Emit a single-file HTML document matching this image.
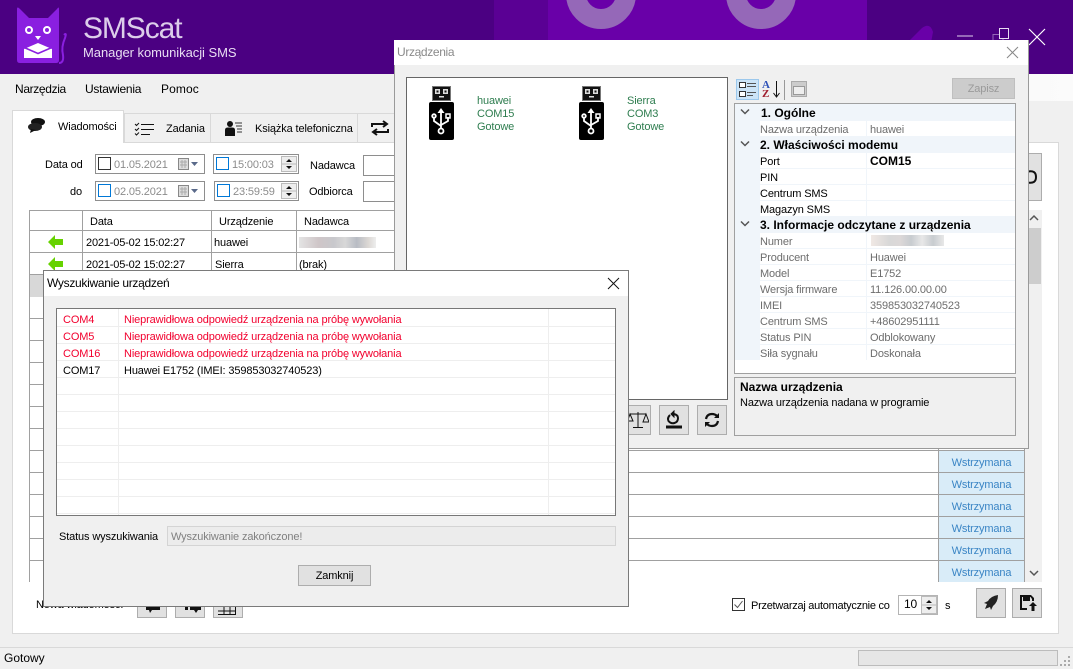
<!DOCTYPE html>
<html lang="pl"><head><meta charset="utf-8"><title>SMScat</title>
<style>
html,body{margin:0;padding:0}
body{width:1073px;height:669px;overflow:hidden;position:relative;background:#f0f0f0;font:11px/14px "Liberation Sans",sans-serif;color:#000;letter-spacing:-.13px}
div,span,svg{position:absolute;box-sizing:border-box}
span{white-space:nowrap;transform:translateY(1px)}
.b{background:#e1e1e1;border:1px solid #adadad}
.l{background:#a0a0a0}
.g{color:#2e7d4f}
.r{color:#f2002e}
.gr{color:#6d6d6d}
.h{font-size:12px;font-weight:700;letter-spacing:0}
.ws{background:#d9ecf8;color:#3a85c5;text-align:center;line-height:24px;left:939px;width:85px;height:21px}
.s{background:#f0f5fa;left:760px;width:255px;height:1px}
.e{background:#eeeeee;left:57px;width:558px;height:1px}
</style></head><body>

<!-- header -->
<div style="left:0;top:0;width:1073px;height:74px;background:#4b0082;overflow:hidden">
<div style="left:494px;top:0;width:54px;height:74px;background:#5a0094"></div>
<div style="left:548px;top:0;width:319px;height:74px;background:#6900a8"></div>
<div style="left:566px;top:-41px;width:70px;height:70px;border-radius:50%;border:20px solid #9568b8"></div>
<div style="left:726px;top:-41px;width:70px;height:70px;border-radius:50%;border:20px solid #9568b8"></div>
<svg style="left:900px;top:20px" width="50" height="30"><path d="M2 28L22 8Q30 2 33 12L30 28Z" fill="#6900a8"/></svg>
</div>
<svg style="left:15px;top:5px" width="55" height="62" viewBox="0 0 55 62">
<path d="M2 4Q2 1 5 4L14 13H33L42 4Q44 1 44 4V55Q44 58 41 58H5Q2 58 2 55Z" fill="#8a1fe0"/>
<path d="M49 30Q52 27 50 33Q46 42 48 50Q49 58 44 58" fill="none" stroke="#8a1fe0" stroke-width="2"/>
<circle cx="14" cy="25" r="3" fill="none" stroke="#fff" stroke-width="2"/>
<circle cx="32" cy="25" r="3" fill="none" stroke="#fff" stroke-width="2"/>
<path d="M20 31H26L23 35Z" fill="#fff"/>
<path d="M9 44L23 38L37 44V53H9Z" fill="#fff"/>
<path d="M8 42L23 48.500L38 42" fill="none" stroke="#8a1fe0" stroke-width="1.500"/>
</svg>
<span style="left:83px;top:10px;font-size:30px;line-height:36px;color:#dccdea;letter-spacing:-1.1px">SMScat</span>
<span style="left:83px;top:44px;font-size:13px;line-height:16px;color:#e8dcf2;letter-spacing:-.05px">Manager komunikacji SMS</span>
<svg style="left:950px;top:25px" width="100" height="25"><path d="M7 11H23" stroke="#9568b8" stroke-width="2"/><path d="M43 9.500H53V25H43Z" fill="none" stroke="#9568b8"/><path d="M49.500 3.500H58.500V13.500H49.500Z" fill="#4b0082" stroke="#e8dcf2"/><path d="M79 4L95 20M95 4L79 20" stroke="#fff" stroke-width="1.200"/></svg>

<!-- menu -->
<div style="left:0;top:74px;width:1073px;height:27px;background:linear-gradient(90deg,#f0f0f0 50%,#fbfbfb)"></div>
<span style="left:15px;top:81px;font-size:12px;letter-spacing:-.35px">Narzędzia</span>
<span style="left:85px;top:81px;font-size:12px;letter-spacing:-.25px">Ustawienia</span>
<span style="left:161px;top:81px;font-size:12px;letter-spacing:.1px">Pomoc</span>

<!-- tabs -->
<div style="left:12px;top:142px;width:1047px;height:492px;background:#fff;border:1px solid #d9d9d9"></div>
<div style="left:124px;top:113px;width:87px;height:30px;background:#f0f0f0;border:1px solid #d9d9d9"></div>
<div style="left:210px;top:113px;width:148px;height:30px;background:#f0f0f0;border:1px solid #d9d9d9"></div>
<div style="left:357px;top:113px;width:60px;height:30px;background:#f0f0f0;border:1px solid #d9d9d9"></div>
<div style="left:12px;top:110px;width:112px;height:33px;background:#fff;border:1px solid #d9d9d9;border-bottom:0"></div>
<svg style="left:27px;top:117px" width="20" height="18"><ellipse cx="11" cy="5" rx="7" ry="4" fill="#111"/><ellipse cx="8" cy="10" rx="7" ry="4" fill="#222"/><path d="M4 12L3 16L9 13Z" fill="#111"/></svg>
<span style="left:58px;top:119px">Wiadomości</span>
<svg style="left:134px;top:122px" width="20" height="14" stroke="#111" fill="none"><path d="M1 2L2.500 3.500L5 1M1 7L2.500 8.500L5 6M1 11.500L2.500 13L5 10.500"/><path d="M7 2.500H20M7 7.500H20M7 12.500H16"/></svg>
<span style="left:166px;top:121px">Zadania</span>
<svg style="left:224px;top:121px" width="18" height="15"><circle cx="6" cy="3" r="3" fill="#111"/><path d="M1 15V9Q1 6.500 4 6.500H8Q11 6.500 11 9V15Z" fill="#111"/><path d="M11 2H18M12 5H18M13 8H18M13 11H18" stroke="#333"/></svg>
<span style="left:255px;top:121px">Książka telefoniczna</span>
<svg style="left:371px;top:120px" width="18" height="16" fill="none" stroke="#111" stroke-width="2"><path d="M1 7V4H15M12 1L16 4L12 7M17 9V12H3M6 9L2 12L6 15"/></svg>

<!-- filter row -->
<span style="left:45px;top:157px;">Data od</span><span style="left:70px;top:184px">do</span>
<div style="left:95px;top:154px;width:110px;height:20px;border:1px solid #8e8e8e"></div>
<div style="left:95px;top:181px;width:110px;height:20px;border:1px solid #8e8e8e"></div>
<div style="left:98px;top:157px;width:13px;height:13px;border:1px solid #333"></div>
<div style="left:98px;top:184px;width:13px;height:13px;border:1px solid #0078d7"></div>
<span style="left:114px;top:157px;color:#8c8c8c">01.05.2021</span>
<span style="left:114px;top:184px;color:#8c8c8c">02.05.2021</span>
<svg style="left:178px;top:157px" width="24" height="14"><rect x="0.500" y="1.500" width="10" height="11" fill="#ddd" stroke="#888"/><path d="M2 5H9M2 8H9M4 3V11M7 3V11" stroke="#aaa"/><path d="M13 5H20L16.500 9Z" fill="#5a6a8a"/></svg>
<svg style="left:178px;top:184px" width="24" height="14"><rect x="0.500" y="1.500" width="10" height="11" fill="#ddd" stroke="#888"/><path d="M2 5H9M2 8H9M4 3V11M7 3V11" stroke="#aaa"/><path d="M13 5H20L16.500 9Z" fill="#5a6a8a"/></svg>
<div style="left:213px;top:154px;width:86px;height:20px;border:1px solid #8e8e8e"></div>
<div style="left:214px;top:181px;width:85px;height:20px;border:1px solid #8e8e8e"></div>
<div style="left:216px;top:157px;width:13px;height:13px;border:1px solid #0078d7"></div>
<div style="left:217px;top:184px;width:13px;height:13px;border:1px solid #0078d7"></div>
<span style="left:232px;top:157px;color:#8c8c8c">15:00:03</span>
<span style="left:233px;top:184px;color:#8c8c8c">23:59:59</span>
<svg style="left:281px;top:156px" width="16" height="16"><rect x="0.500" y="0.500" width="15" height="15" fill="#eee" stroke="#bbb"/><path d="M0 8H16" stroke="#bbb"/><path d="M5 6L8 3L11 6ZM5 10H11L8 13Z" fill="#111"/></svg>
<svg style="left:281px;top:183px" width="16" height="16"><rect x="0.500" y="0.500" width="15" height="15" fill="#eee" stroke="#bbb"/><path d="M0 8H16" stroke="#bbb"/><path d="M5 6L8 3L11 6ZM5 10H11L8 13Z" fill="#111"/></svg>
<span style="left:310px;top:158px">Nadawca</span><span style="left:309px;top:184px">Odbiorca</span>
<div style="left:363px;top:155px;width:40px;height:21px;border:1px solid #8e8e8e;background:#fff"></div>
<div style="left:363px;top:181px;width:40px;height:21px;border:1px solid #8e8e8e;background:#fff"></div>
<div class="b" style="left:1012px;top:153px;width:30px;height:48px"></div>
<svg style="left:1026px;top:170px" width="12" height="14"><path d="M2 1.500Q10 0 10 7Q10 14 2 12.500" fill="none" stroke="#111" stroke-width="2"/></svg>

<!-- table -->
<div style="left:29px;top:210px;width:997px;height:372px;background:#fff"></div>
<div class="l" style="left:29px;top:210px;width:1px;height:372px"></div>
<div class="l" style="left:29px;top:210px;width:997px;height:1px"></div>
<div class="l" style="left:29px;top:230px;width:997px;height:1px"></div>
<div class="l" style="left:29px;top:252px;width:997px;height:1px"></div>
<div class="l" style="left:29px;top:274px;width:997px;height:1px"></div>
<div class="l" style="left:29px;top:296px;width:997px;height:1px"></div>
<div class="l" style="left:29px;top:318px;width:997px;height:1px"></div>
<div class="l" style="left:29px;top:340px;width:997px;height:1px"></div>
<div class="l" style="left:29px;top:362px;width:997px;height:1px"></div>
<div class="l" style="left:29px;top:384px;width:997px;height:1px"></div>
<div class="l" style="left:29px;top:406px;width:997px;height:1px"></div>
<div class="l" style="left:29px;top:428px;width:997px;height:1px"></div>
<div class="l" style="left:29px;top:450px;width:997px;height:1px"></div>
<div class="l" style="left:29px;top:472px;width:997px;height:1px"></div>
<div class="l" style="left:29px;top:494px;width:997px;height:1px"></div>
<div class="l" style="left:29px;top:516px;width:997px;height:1px"></div>
<div class="l" style="left:29px;top:538px;width:997px;height:1px"></div>
<div class="l" style="left:29px;top:560px;width:997px;height:1px"></div>
<div class="l" style="left:82px;top:210px;width:1px;height:65px"></div>
<div class="l" style="left:211px;top:210px;width:1px;height:65px"></div>
<div class="l" style="left:296px;top:210px;width:1px;height:65px"></div>
<div class="l" style="left:938px;top:210px;width:1px;height:372px"></div>
<div class="l" style="left:1024px;top:210px;width:1px;height:372px"></div>
<span style="left:90px;top:214px">Data</span><span style="left:219px;top:214px">Urządzenie</span><span style="left:304px;top:214px">Nadawca</span>
<svg style="left:48px;top:235px" width="16" height="14"><path d="M0 7L7 0V4H15V10H7V14Z" fill="#66d200"/></svg>
<svg style="left:48px;top:257px" width="16" height="14"><path d="M0 7L7 0V4H15V10H7V14Z" fill="#66d200"/></svg>
<span style="left:86px;top:235px;letter-spacing:-.17px">2021-05-02 15:02:27</span><span style="left:214px;top:235px">huawei</span>
<span style="left:86px;top:257px;letter-spacing:-.17px">2021-05-02 15:02:27</span><span style="left:215px;top:257px">Sierra</span><span style="left:299px;top:257px">(brak)</span>
<div style="left:299px;top:237px;width:77px;height:11px;background:linear-gradient(90deg,#e4e4e4,#cfc6c8 25%,#c8c8cc 45%,#d8d8d8 60%,#b8bcc4 75%,#dcd8d4 90%,#eee)"></div>
<div style="left:30px;top:275px;width:52px;height:22px;background:#d8d8d8"></div>
<div class="ws" style="top:451px">Wstrzymana</div>
<div class="ws" style="top:473px">Wstrzymana</div>
<div class="ws" style="top:495px">Wstrzymana</div>
<div class="ws" style="top:517px">Wstrzymana</div>
<div class="ws" style="top:539px">Wstrzymana</div>
<div class="ws" style="top:561px">Wstrzymana</div>
<div style="left:1025px;top:210px;width:17px;height:372px;background:#f0f0f0"></div>
<div style="top:228px;width:13px;height:56px;background:#cdcdcd;left:1028px"></div>
<svg style="left:1028px;top:213px" width="12" height="10"><path d="M2 7L6 3L10 7" fill="none" stroke="#555" stroke-width="1.500"/></svg>
<svg style="left:1028px;top:568px" width="12" height="10"><path d="M2 3L6 7L10 3" fill="none" stroke="#555" stroke-width="1.500"/></svg>

<!-- bottom -->
<span style="left:36px;top:597px">Nowa wiadomość:</span>
<div class="b" style="left:137px;top:600px;width:30px;height:18px"></div>
<div class="b" style="left:175px;top:600px;width:30px;height:18px"></div>
<div class="b" style="left:213px;top:600px;width:30px;height:18px"></div>
<svg style="left:144px;top:604px" width="18" height="10"><path d="M2 3H16V6H8L6 9L5 6H2Z" fill="#111"/></svg>
<svg style="left:183px;top:604px" width="18" height="10"><path d="M2 3H5V6H2ZM7 3H19V6H15L13 9L11 6H7Z" fill="#111"/></svg>
<svg style="left:217px;top:604px" width="20" height="12"><path d="M1 7H19M1 10.500H19M7 2V11M13 2V11M18.500 2V11" stroke="#111"/></svg>
<svg style="left:732px;top:598px" width="14" height="14"><rect x="0.500" y="0.500" width="12" height="12" fill="#fff" stroke="#333"/><path d="M2.500 6.500L5.500 9.500L10.500 3" fill="none" stroke="#555"/></svg>
<span style="left:751px;top:598px;letter-spacing:-.27px">Przetwarzaj automatycznie co</span>
<div style="left:898px;top:595px;width:40px;height:20px;border:1px solid #b4b4b4;background:#fff"></div>
<span style="left:904px;top:596px;font-size:12px">10</span>
<svg style="left:921px;top:596px" width="16" height="18"><rect x="0.500" y="0.500" width="15" height="17" fill="#eee" stroke="#bbb"/><path d="M0 9H16" stroke="#bbb"/><path d="M5 7L8 4L11 7ZM5 11H11L8 14Z" fill="#111"/></svg>
<span style="left:945px;top:598px">s</span>
<div class="b" style="left:976px;top:588px;width:30px;height:30px"></div>
<div class="b" style="left:1012px;top:588px;width:30px;height:30px"></div>
<svg style="left:982px;top:594px" width="18" height="18"><path d="M16 1Q9 2 6 7L2 9L5 10L3 15L8 13L9 16L11 12Q16 8 16 1Z" fill="#222"/></svg>
<svg style="left:1019px;top:594px" width="18" height="18"><path d="M1 1H12L15 4V7H13V5L11.500 3H11V7H4V3H3V14H8V16H1Z" fill="#111"/><path d="M14 8L18 12H15.500V17H12.500V12H10Z" fill="#111"/></svg>

<!-- status bar -->
<div style="left:0;top:647px;width:1073px;height:1px;background:#d9d9d9"></div>
<span style="left:4px;top:650px;font-size:12px;letter-spacing:0">Gotowy</span>
<div style="left:858px;top:650px;width:200px;height:16px;border:1px solid #bcbcbc;background:#e6e6e6"></div>
<svg style="left:1060px;top:655px" width="12" height="12" fill="#aaa"><rect x="8" y="1" width="2" height="2"/><rect x="4" y="5" width="2" height="2"/><rect x="8" y="5" width="2" height="2"/><rect x="0" y="9" width="2" height="2"/><rect x="4" y="9" width="2" height="2"/><rect x="8" y="9" width="2" height="2"/></svg>

<!-- Urządzenia dialog -->
<div style="left:394px;top:40px;width:635px;height:409px;background:#f0f0f0;border:1px solid #9a9a9a;border-top:0"></div>
<div style="left:394px;top:40px;width:634px;height:25px;background:#fff"></div>
<span style="left:397px;top:44px;font-size:12px;color:#8a8a8a;letter-spacing:-.35px">Urządzenia</span>
<svg style="left:1006px;top:46px" width="13" height="13"><path d="M1 1L12 12M12 1L1 12" stroke="#888"/></svg>
<div style="left:406px;top:77px;width:322px;height:323px;background:#fff;border:1px solid #666"></div>
<svg style="left:428px;top:85px" width="26" height="56"><rect x="4.500" y="1.500" width="18" height="14" fill="#111" stroke="#777"/><rect x="7" y="4" width="5" height="5" fill="#ddd"/><rect x="15" y="4" width="5" height="5" fill="#ddd"/><rect x="8.500" y="5.500" width="2" height="2" fill="#111"/><rect x="16.500" y="5.500" width="2" height="2" fill="#111"/><rect x="11" y="11" width="5" height="1.500" fill="#ddd"/><rect x="1" y="17" width="25" height="38" rx="2" fill="#000"/><g fill="none" stroke="#fff" stroke-width="1.800"><path d="M13 26V44"/><path d="M13 41L6 36V33M13 40L20 36V32"/><circle cx="13" cy="46" r="2.500"/><circle cx="6" cy="31" r="1.800"/></g><path d="M9.500 28L13 23L16.500 28Z" fill="#fff"/><rect x="18" y="29" width="4" height="4" fill="none" stroke="#fff" stroke-width="1.500"/></svg>
<svg style="left:578px;top:85px" width="26" height="56"><rect x="4.500" y="1.500" width="18" height="14" fill="#111" stroke="#777"/><rect x="7" y="4" width="5" height="5" fill="#ddd"/><rect x="15" y="4" width="5" height="5" fill="#ddd"/><rect x="8.500" y="5.500" width="2" height="2" fill="#111"/><rect x="16.500" y="5.500" width="2" height="2" fill="#111"/><rect x="11" y="11" width="5" height="1.500" fill="#ddd"/><rect x="1" y="17" width="25" height="38" rx="2" fill="#000"/><g fill="none" stroke="#fff" stroke-width="1.800"><path d="M13 26V44"/><path d="M13 41L6 36V33M13 40L20 36V32"/><circle cx="13" cy="46" r="2.500"/><circle cx="6" cy="31" r="1.800"/></g><path d="M9.500 28L13 23L16.500 28Z" fill="#fff"/><rect x="18" y="29" width="4" height="4" fill="none" stroke="#fff" stroke-width="1.500"/></svg>
<span class="g" style="left:477px;top:93px">huawei</span><span class="g" style="left:477px;top:106px">COM15</span><span class="g" style="left:477px;top:119px">Gotowe</span>
<span class="g" style="left:627px;top:93px">Sierra</span><span class="g" style="left:627px;top:106px">COM3</span><span class="g" style="left:627px;top:119px">Gotowe</span>

<div class="b" style="left:621px;top:405px;width:30px;height:30px"></div>
<div class="b" style="left:659px;top:405px;width:30px;height:30px"></div>
<div class="b" style="left:697px;top:405px;width:30px;height:30px"></div>
<svg style="left:627px;top:411px" width="22" height="18" fill="none" stroke="#111"><path d="M11 1V16M6 16.500H16M3 3H19"/><path d="M3 3L0.500 10H6ZM19 3L16 11H22Z"/></svg>
<svg style="left:665px;top:410px" width="18" height="20" fill="none" stroke="#111" stroke-width="2"><path d="M5 5Q2 8 3.500 11Q6 14 9.500 13Q13 12 13 8Q13 5 9 4"/><path d="M9 1V7L6 4Z" fill="#111" stroke-width="1"/><path d="M1 17H17" stroke-width="3"/></svg>
<svg style="left:704px;top:412px" width="16" height="16" fill="none" stroke="#111" stroke-width="2.200"><path d="M2 7Q3 2 8 2Q11 2 13 4M14 9Q13 14 8 14Q5 14 3 12"/><path d="M15 1V6H10ZM1 15V10H6Z" fill="#111" stroke-width="0"/></svg>

<div style="left:736px;top:79px;width:23px;height:21px;background:#cce4f7;border:1px solid #9cc8ec"></div>
<svg style="left:738px;top:81px" width="20" height="17"><rect x="1.500" y="1.500" width="6" height="5" fill="#fff" stroke="#333"/><rect x="1.500" y="10.500" width="6" height="5" fill="#fff" stroke="#333"/><path d="M9 2.500H18M9 5.500H18M9 11.500H18M9 14.500H15" stroke="#555"/></svg>
<span style="left:762px;top:79px;font:700 11px/10px 'Liberation Serif',serif;color:#2f52b8">A</span>
<span style="left:762px;top:88px;font:700 11px/10px 'Liberation Serif',serif;color:#a02030">Z</span>
<svg style="left:772px;top:80px" width="10" height="19"><path d="M4.500 1V16M1.500 13L4.500 17L7.500 13" fill="none" stroke="#111"/></svg>
<div style="left:784px;top:80px;width:1px;height:20px;background:#999"></div>
<svg style="left:791px;top:81px" width="17" height="17"><rect x="0.500" y="0.500" width="15" height="15" fill="#ccc" stroke="#aaa"/><rect x="2.500" y="5.500" width="11" height="8" fill="#eee" stroke="#999"/></svg>
<div style="left:952px;top:78px;width:63px;height:21px;background:#cccccc;border:1px solid #bfbfbf;color:#9a9a9a;text-align:center;line-height:21px">Zapisz</div>

<!-- property grid -->
<div style="left:734px;top:103px;width:282px;height:271px;background:#fff;border:1px solid #a0a0a0"></div>
<div style="left:735px;top:104px;width:25px;height:256px;background:#f0f5fa"></div>
<div style="left:735px;top:104px;width:280px;height:17px;background:#f0f5fa"></div>
<div style="left:735px;top:136px;width:280px;height:17px;background:#f0f5fa"></div>
<div style="left:735px;top:216px;width:280px;height:17px;background:#f0f5fa"></div>
<div style="left:866px;top:121px;width:1px;height:239px;background:#f0f5fa"></div>
<div class="s" style="top:168px"></div>
<div class="s" style="top:184px"></div>
<div class="s" style="top:200px"></div>
<div class="s" style="top:248px"></div>
<div class="s" style="top:264px"></div>
<div class="s" style="top:280px"></div>
<div class="s" style="top:296px"></div>
<div class="s" style="top:312px"></div>
<div class="s" style="top:328px"></div>
<div class="s" style="top:344px"></div>
<svg style="left:740px;top:108px" width="10" height="8"><path d="M1 1.500L5 5.500L9 1.500" fill="none" stroke="#555" stroke-width="1.500"/></svg>
<svg style="left:740px;top:140px" width="10" height="8"><path d="M1 1.500L5 5.500L9 1.500" fill="none" stroke="#555" stroke-width="1.500"/></svg>
<svg style="left:740px;top:220px" width="10" height="8"><path d="M1 1.500L5 5.500L9 1.500" fill="none" stroke="#555" stroke-width="1.500"/></svg>
<span class="h" style="left:761px;top:105px">1. Ogólne</span>
<span class="h" style="left:760px;top:137px">2. Właściwości modemu</span>
<span class="h" style="left:760px;top:217px">3. Informacje odczytane z urządzenia</span>
<span class="gr" style="left:760px;top:122px">Nazwa urządzenia</span><span class="gr" style="left:870px;top:122px">huawei</span>
<span style="left:760px;top:154px">Port</span><span class="h" style="left:870px;top:153px">COM15</span>
<span style="left:760px;top:170px">PIN</span>
<span style="left:760px;top:186px">Centrum SMS</span>
<span style="left:760px;top:202px">Magazyn SMS</span>
<span class="gr" style="left:760px;top:234px">Numer</span>
<div style="left:871px;top:235px;width:73px;height:11px;background:linear-gradient(90deg,#f0e8e4,#d8d8d8 25%,#dcd8d8 40%,#c8ccd0 55%,#e8e8e8 70%,#c8ccd0 85%,#e8e8e8)"></div>
<span class="gr" style="left:760px;top:250px">Producent</span><span class="gr" style="left:870px;top:250px">Huawei</span>
<span class="gr" style="left:760px;top:266px">Model</span><span class="gr" style="left:870px;top:266px">E1752</span>
<span class="gr" style="left:760px;top:282px">Wersja firmware</span><span class="gr" style="left:870px;top:282px">11.126.00.00.00</span>
<span class="gr" style="left:760px;top:298px">IMEI</span><span class="gr" style="left:870px;top:298px">359853032740523</span>
<span class="gr" style="left:760px;top:314px">Centrum SMS</span><span class="gr" style="left:870px;top:314px">+48602951111</span>
<span class="gr" style="left:760px;top:330px">Status PIN</span><span class="gr" style="left:870px;top:330px">Odblokowany</span>
<span class="gr" style="left:760px;top:346px">Siła sygnału</span><span class="gr" style="left:870px;top:346px">Doskonała</span>
<div style="left:734px;top:377px;width:282px;height:59px;border:1px solid #a0a0a0;background:#f0f0f0"></div>
<span class="h" style="left:740px;top:379px">Nazwa urządzenia</span>
<span style="left:740px;top:395px">Nazwa urządzenia nadana w programie</span>

<!-- search dialog -->
<div style="left:43px;top:270px;width:586px;height:337px;background:#f0f0f0;border:1px solid #7a7a7a"></div>
<div style="left:44px;top:271px;width:584px;height:25px;background:#fff"></div>
<span style="left:47px;top:275px;font-size:12px;letter-spacing:-.3px">Wyszukiwanie urządzeń</span>
<svg style="left:607px;top:277px" width="13" height="13"><path d="M1 1L12 12M12 1L1 12" stroke="#111"/></svg>
<div style="left:56px;top:308px;width:560px;height:208px;background:#fff;border:1px solid #777"></div>
<div style="left:118px;top:309px;width:1px;height:206px;background:#eeeeee"></div>
<div style="left:548px;top:309px;width:1px;height:206px;background:#eeeeee"></div>
<div class="e" style="top:326px"></div>
<div class="e" style="top:343px"></div>
<div class="e" style="top:360px"></div>
<div class="e" style="top:377px"></div>
<div class="e" style="top:394px"></div>
<div class="e" style="top:411px"></div>
<div class="e" style="top:428px"></div>
<div class="e" style="top:445px"></div>
<div class="e" style="top:462px"></div>
<div class="e" style="top:479px"></div>
<div class="e" style="top:496px"></div>
<div class="e" style="top:513px"></div>
<span class="r" style="left:63px;top:312px">COM4</span><span class="r" style="left:124px;top:312px">Nieprawidłowa odpowiedź urządzenia na próbę wywołania</span>
<span class="r" style="left:63px;top:329px">COM5</span><span class="r" style="left:124px;top:329px">Nieprawidłowa odpowiedź urządzenia na próbę wywołania</span>
<span class="r" style="left:63px;top:346px">COM16</span><span class="r" style="left:124px;top:346px">Nieprawidłowa odpowiedź urządzenia na próbę wywołania</span>
<span style="left:63px;top:363px">COM17</span><span style="left:124px;top:363px">Huawei E1752 (IMEI: 359853032740523)</span>
<span style="left:59px;top:529px">Status wyszukiwania</span>
<div style="left:167px;top:526px;width:449px;height:20px;background:#ececec;border:1px solid #d4d4d4;color:#808080;padding:3px 3px">Wyszukiwanie zakończone!</div>
<div class="b" style="left:298px;top:565px;width:73px;height:21px;text-align:center;line-height:21px">Zamknij</div>
</body></html>
